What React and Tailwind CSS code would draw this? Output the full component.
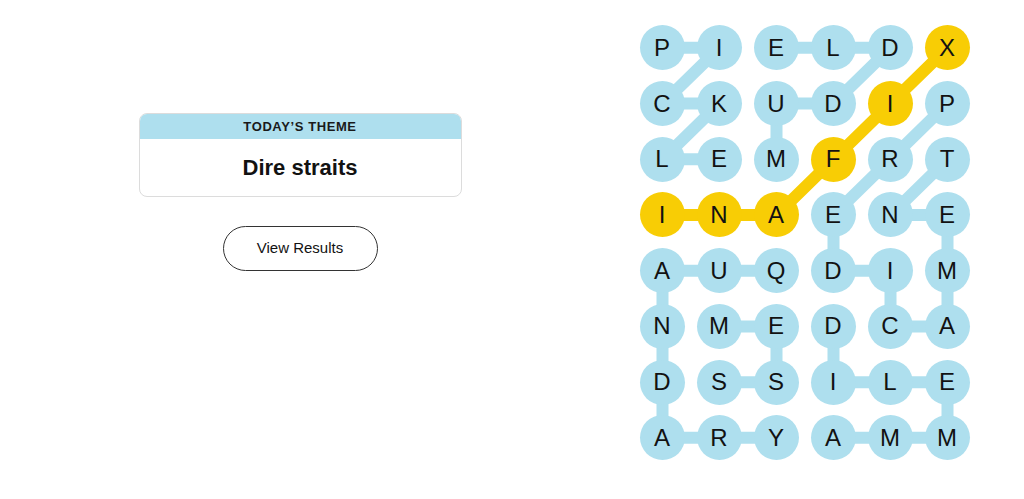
import React from "react";

const LETTERS = [
  "PIELDX",
  "CKUDIP",
  "LEMFRT",
  "INAENE",
  "AUQDIM",
  "NMEDCA",
  "DSSILE",
  "ARYAMM",
];

const BLUE = "#aedfee";
const YELLOW = "#f8cd05";

const WORDS = [
  { color: BLUE, path: [[0,0],[0,1],[1,0],[1,1],[2,0],[2,1]] },
  { color: BLUE, path: [[2,2],[1,2],[1,3],[0,4],[0,3],[0,2]] },
  { color: BLUE, path: [[1,5],[2,4],[3,3],[4,3],[4,4],[5,4],[5,5],[4,5],[3,5],[3,4],[2,5]] },
  { color: BLUE, path: [[4,2],[4,1],[4,0],[5,0],[6,0],[7,0],[7,1],[7,2]] },
  { color: BLUE, path: [[5,1],[5,2],[6,2],[6,1]] },
  { color: BLUE, path: [[5,3],[6,3],[6,4],[6,5],[7,5],[7,4],[7,3]] },
  { color: YELLOW, path: [[3,0],[3,1],[3,2],[2,3],[1,4],[0,5]] },
];

const CW = 57;
const RH = 55.714;

const colorOf = {};
WORDS.forEach((w) => w.path.forEach(([r, c]) => (colorOf[`${r}-${c}`] = w.color)));

function Board() {
  const W = CW * 6;
  const H = RH * 8;
  return (
    <div className="relative" style={{ width: W, height: H }}>
      <svg className="absolute inset-0" width={W} height={H}>
        {WORDS.map((w, i) => (
          <polyline
            key={i}
            points={w.path.map(([r, c]) => `${c * CW + CW / 2},${r * RH + RH / 2}`).join(" ")}
            fill="none"
            stroke={w.color}
            strokeWidth="12"
            strokeLinejoin="round"
            strokeLinecap="round"
          />
        ))}
      </svg>
      <div className="relative grid grid-cols-[repeat(6,57px)] auto-rows-[55.714px]">
        {LETTERS.map((row, r) =>
          row.split("").map((ch, c) => {
            const yellow = colorOf[`${r}-${c}`] === YELLOW;
            return (
              <div key={`${r}-${c}`} className="flex items-center justify-center">
                <div
                  className={`w-[45px] h-[45px] rounded-full flex items-center justify-center text-[24px] leading-none text-[#121212] ${
                    yellow ? "bg-[#f8cd05]" : "bg-[#aedfee]"
                  }`}
                >
                  {ch}
                </div>
              </div>
            );
          })
        )}
      </div>
    </div>
  );
}

export default function App() {
  return (
    <div
      className="w-[1024px] h-[499px] bg-white flex"
      style={{ fontFamily: '"Liberation Sans", Arial, sans-serif' }}
    >
      <div className="w-[600px] flex flex-col items-center pt-[113px]">
        <div className="w-[323px] rounded-lg border border-[#dcdcdc] overflow-hidden">
          <div className="h-[25px] bg-[#aedfee] flex items-center justify-center text-[13px] font-bold tracking-[0.6px] text-[#1a1a1a]">
            TODAY’S THEME
          </div>
          <div className="h-[57px] flex items-center justify-center text-[22px] font-bold text-[#121212]">
            Dire straits
          </div>
        </div>
        <button className="mt-[29px] w-[155px] h-[45px] rounded-full border border-[#333] text-[15px] text-[#121212] flex items-center justify-center">
          View Results
        </button>
      </div>
      <div className="pl-[33.5px] pt-[20px]">
        <Board />
      </div>
    </div>
  );
}
